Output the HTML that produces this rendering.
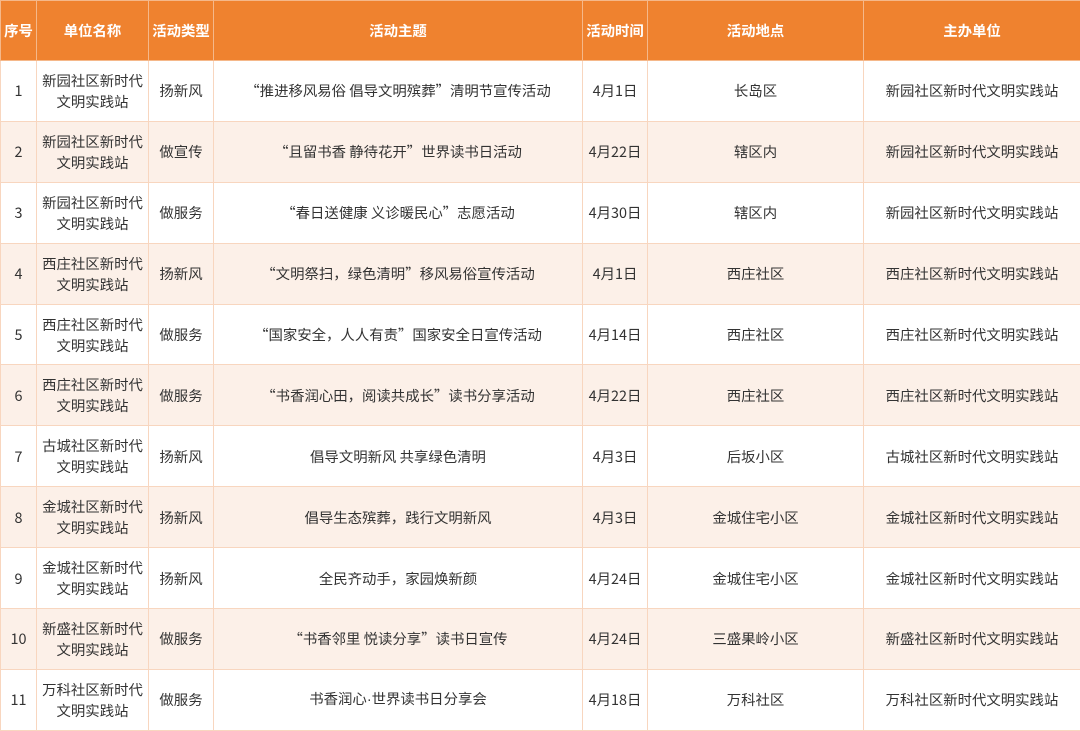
<!DOCTYPE html>
<html><head><meta charset="utf-8"><style>
html,body{margin:0;padding:0;background:#fff;}
table{border-collapse:collapse;width:1080px;table-layout:fixed;font-family:"Noto Sans CJK SC","Liberation Sans",sans-serif;font-size:14.4px;color:#333;}
td,th{border:1px solid #f8d6bf;text-align:center;vertical-align:middle;padding:0;line-height:21px;}
th{background:#ef822f;color:#fff;font-weight:bold;height:59px;border-color:#f5b88a;}
td{height:59.9px;}
tr.a td{background:#fcf0e8;}
.l{font-family:"Liberation Sans",sans-serif;}
</style></head><body>
<table>
<colgroup><col style="width:36px"><col style="width:112px"><col style="width:65px"><col style="width:369px"><col style="width:65px"><col style="width:216px"><col style="width:217px"></colgroup>
<tr><th>序号</th><th>单位名称</th><th>活动类型</th><th>活动主题</th><th>活动时间</th><th>活动地点</th><th>主办单位</th></tr>
<tr><td>1</td><td>新园社区新时代<br>文明实践站</td><td>扬新风</td><td>“推进移风易俗 倡导文明殡葬”清明节宣传活动</td><td>4月1日</td><td>长岛区</td><td>新园社区新时代文明实践站</td></tr>
<tr class="a"><td>2</td><td>新园社区新时代<br>文明实践站</td><td>做宣传</td><td>“且留书香 静待花开”世界读书日活动</td><td>4月22日</td><td>辖区内</td><td>新园社区新时代文明实践站</td></tr>
<tr><td>3</td><td>新园社区新时代<br>文明实践站</td><td>做服务</td><td>“春日送健康 义诊暖民心”志愿活动</td><td>4月30日</td><td>辖区内</td><td>新园社区新时代文明实践站</td></tr>
<tr class="a"><td>4</td><td>西庄社区新时代<br>文明实践站</td><td>扬新风</td><td>“文明祭扫，绿色清明”移风易俗宣传活动</td><td>4月1日</td><td>西庄社区</td><td>西庄社区新时代文明实践站</td></tr>
<tr><td>5</td><td>西庄社区新时代<br>文明实践站</td><td>做服务</td><td>“国家安全，人人有责”国家安全日宣传活动</td><td>4月14日</td><td>西庄社区</td><td>西庄社区新时代文明实践站</td></tr>
<tr class="a"><td>6</td><td>西庄社区新时代<br>文明实践站</td><td>做服务</td><td>“书香润心田，阅读共成长”读书分享活动</td><td>4月22日</td><td>西庄社区</td><td>西庄社区新时代文明实践站</td></tr>
<tr><td>7</td><td>古城社区新时代<br>文明实践站</td><td>扬新风</td><td>倡导文明新风 共享绿色清明</td><td>4月3日</td><td>后坂小区</td><td>古城社区新时代文明实践站</td></tr>
<tr class="a"><td>8</td><td>金城社区新时代<br>文明实践站</td><td>扬新风</td><td>倡导生态殡葬，践行文明新风</td><td>4月3日</td><td>金城住宅小区</td><td>金城社区新时代文明实践站</td></tr>
<tr><td>9</td><td>金城社区新时代<br>文明实践站</td><td>扬新风</td><td>全民齐动手，家园焕新颜</td><td>4月24日</td><td>金城住宅小区</td><td>金城社区新时代文明实践站</td></tr>
<tr class="a"><td>10</td><td>新盛社区新时代<br>文明实践站</td><td>做服务</td><td>“书香邻里 悦读分享”读书日宣传</td><td>4月24日</td><td>三盛果岭小区</td><td>新盛社区新时代文明实践站</td></tr>
<tr><td>11</td><td>万科社区新时代<br>文明实践站</td><td>做服务</td><td>书香润心<span class="l">·</span>世界读书日分享会</td><td>4月18日</td><td>万科社区</td><td>万科社区新时代文明实践站</td></tr>
</table>
</body></html>
